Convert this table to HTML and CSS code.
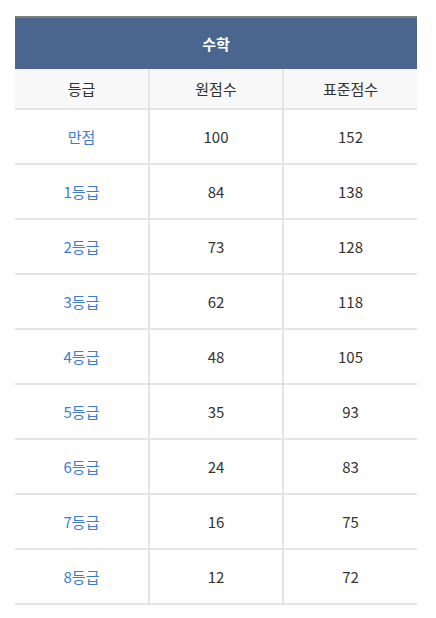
FILE: index.html
```html
<!DOCTYPE html>
<html lang="ko">
<head>
<meta charset="utf-8">
<link rel="stylesheet" href="styles.css">
</head>
<body>
<table class="score">
  <thead>
    <tr><th class="title" colspan="3">수학</th></tr>
    <tr class="sub"><th>등급</th><th>원점수</th><th>표준점수</th></tr>
  </thead>
  <tbody>
    <tr><td class="grade">만점</td><td>100</td><td>152</td></tr>
    <tr><td class="grade">1등급</td><td>84</td><td>138</td></tr>
    <tr><td class="grade">2등급</td><td>73</td><td>128</td></tr>
    <tr><td class="grade">3등급</td><td>62</td><td>118</td></tr>
    <tr><td class="grade">4등급</td><td>48</td><td>105</td></tr>
    <tr><td class="grade">5등급</td><td>35</td><td>93</td></tr>
    <tr><td class="grade">6등급</td><td>24</td><td>83</td></tr>
    <tr><td class="grade">7등급</td><td>16</td><td>75</td></tr>
    <tr><td class="grade">8등급</td><td>12</td><td>72</td></tr>
  </tbody>
</table>
</body>
</html>
```
FILE: styles.css
```css
html, body {
  margin: 0;
  background: #fff;
}
body {
  padding: 16px 20px 0 15px;
  font-family: "Noto Sans CJK KR", "Noto Sans", sans-serif;
  font-size: 15px;
  color: #333;
}
.score {
  width: 402px;
  border-collapse: collapse;
  table-layout: fixed;
  border-top: 2px solid #7d7d7d;
}
.score th, .score td {
  text-align: center;
  padding: 0;
  font-weight: normal;
}
.score .title {
  background: #4a668f;
  color: #fff;
  font-weight: bold;
  height: 51px;
}
.score .sub th {
  background: #f8f8f8;
  height: 39px;
  border-left: 2px solid #e4e4e4;
  border-bottom: 2px solid #e4e4e4;
  color: #333;
}
.score .sub th:first-child { border-left: none; }
.score td {
  height: 53px;
  border-left: 2px solid #e4e4e4;
  border-bottom: 2px solid #e4e4e4;
}
.score td:first-child { border-left: none; }
.score .grade { color: #3d7cd2; }
```
